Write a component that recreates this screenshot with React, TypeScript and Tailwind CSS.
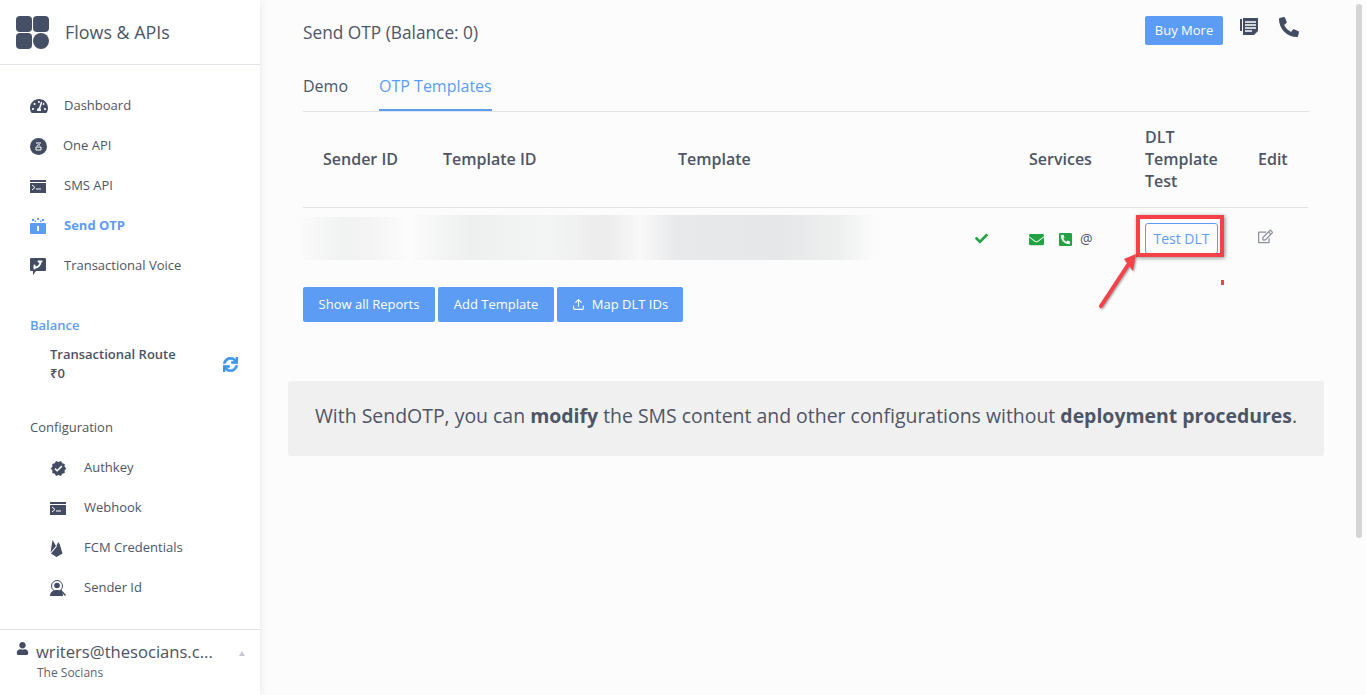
import { ReactNode } from 'react'
import { FaCheck, FaEnvelope, FaPhoneAlt, FaPhoneSquareAlt, FaRegEdit, FaSync, FaTachometerAlt, FaUser } from 'react-icons/fa'
import { MdVerified } from 'react-icons/md'
import { Upload } from 'lucide-react'

const TerminalIcon = () => (
  <svg width="16" height="13" viewBox="0 0 16 13">
    <path fill="currentColor" d="M0 0h16v13H0z" />
    <path fill="#fff" d="M0 2h16v1H0z" />
    <path stroke="#fff" strokeWidth="1" fill="none" d="M2 5l3 2.5L2 10M6 9h5" />
  </svg>
)

const OneApiIcon = () => (
  <svg width="17" height="17" viewBox="0 0 17 17">
    <circle cx="8.5" cy="8.5" r="8.5" fill="currentColor" />
    <path stroke="#fff" strokeWidth="1" fill="none" d="M6 5h5M7 8a2 1.5 0 0 1 3-1M6 9h5v3H6z" />
  </svg>
)

const OtpIcon = () => (
  <svg width="16" height="16" viewBox="0 0 16 16">
    <path fill="currentColor" d="M1 5h14a1 1 0 0 1 1 1v9a1 1 0 0 1-1 1H1a1 1 0 0 1-1-1V6a1 1 0 0 1 1-1z" />
    <path fill="#fff" d="M7 8h2v5H7z" />
    <path fill="currentColor" d="M2 1h2v2H2zM7 0h2v2H7zM12 1h2v2h-2zM4.5 2.5h1.5v1.5H4.500zM10 2.500h1.500v1.500H10z" />
  </svg>
)

const VoiceIcon = () => (
  <svg width="16" height="17" viewBox="0 0 16 17">
    <path fill="currentColor" d="M1 0h14a1 1 0 0 1 1 1v11a1 1 0 0 1-1 1H6l-3 4v-4H1a1 1 0 0 1-1-1V1a1 1 0 0 1 1-1z" />
    <path stroke="#fff" strokeWidth="2" strokeLinecap="round" fill="none" d="M5 9.500c3 0 5.500-2.500 5.500-6M8.500 3.500h3M4.500 7.500v3" />
  </svg>
)

const SenderIcon = () => (
  <svg width="16" height="16" viewBox="0 0 16 16">
    <circle cx="7" cy="6" r="5.500" fill="none" stroke="currentColor" />
    <circle cx="7" cy="5.500" r="2.800" fill="currentColor" />
    <path fill="currentColor" d="M0 16c0-4 3-6 7-6s6 2 6 6z" />
    <path stroke="currentColor" strokeWidth="1.500" d="M10.500 10l5 5.500" />
  </svg>
)

const FirebaseIcon = () => (
  <svg width="13" height="17" viewBox="0 0 12 17">
    <path fill="currentColor" d="M0 12.500L2 0l3.500 6zM6 5.500L7.800 2l1 2-2.300 3z" />
    <path fill="currentColor" d="M0.500 13.500L9 3.500l3 10L6 17z" />
  </svg>
)

const NewsIcon = () => (
  <svg width="18" height="17" viewBox="0 0 18 17">
    <path fill="currentColor" d="M3 0h15v13l-4 4H3z" />
    <path fill="currentColor" d="M0 1h2v12H0z" />
    <path stroke="#fff" strokeWidth="1.300" d="M5 4h11M5 7h11M5 10h11M5 13h7" />
  </svg>
)

const NavItem = ({ icon, label, active, textLeft = 'w-[34px]' }: { icon: ReactNode; label: string; active?: boolean; textLeft?: string }) => (
  <div className={`flex h-10 items-center text-[13px] ${active ? 'font-bold text-[#5d9cf5]' : 'text-[#4d5566]'}`}>
    <span className={`flex shrink-0 items-center ${textLeft} ${active ? 'text-[#5d9cf5]' : 'text-[#434c63]'}`}>{icon}</span>
    {label}
  </div>
)

const Sidebar = () => (
  <aside className="flex h-[695px] w-[260px] shrink-0 flex-col bg-white shadow-[2px_0_6px_rgba(0,0,0,0.06)]">
    <div className="flex h-[65px] items-center border-b border-[#e3e3ea] pl-4">
      <div className="grid grid-cols-2 gap-px">
        <span className="size-4 rounded-[4px] bg-[#454f66]" />
        <span className="size-4 rounded-[4px] bg-[#454f66]" />
        <span className="size-4 rounded-[4px] bg-[#454f66]" />
        <span className="size-4 rounded-full bg-[#454f66]" />
      </div>
      <span className="ml-4 text-[17.900px] text-[#4d5566]">Flows &amp; APIs</span>
    </div>
    <nav className="px-[30px] pt-[21px]">
      <NavItem icon={<FaTachometerAlt size={18} />} label="Dashboard" />
      <NavItem icon={<OneApiIcon />} label="One API" textLeft="w-[33px]" />
      <NavItem icon={<TerminalIcon />} label="SMS API" />
      <NavItem icon={<OtpIcon />} label="Send OTP" active />
      <NavItem icon={<VoiceIcon />} label="Transactional Voice" />
    </nav>
    <div className="mt-[29px] px-[30px]">
      <div className="h-5 text-[13px] font-semibold leading-5 text-[#5d9cf5]">Balance</div>
      <div className="mt-2.5 flex items-center justify-between pl-5">
        <div className="text-[13px] leading-[19px] text-[#4a5263]">
          <div className="font-semibold">Transactional Route</div>
          <div className="font-semibold">₹0</div>
        </div>
        <FaSync size={15} stroke="currentColor" strokeWidth={24} className="-mr-2 text-[#3f97e8]" />
      </div>
      <div className="mt-[34px] h-5 text-[13px] leading-5 text-[#4d5566]">Configuration</div>
      <div className="mt-[11px] pl-5">
        <NavItem icon={<MdVerified size={17} />} label="Authkey" />
        <NavItem icon={<TerminalIcon />} label="Webhook" />
        <NavItem icon={<FirebaseIcon />} label="FCM Credentials" />
        <NavItem icon={<SenderIcon />} label="Sender Id" />
      </div>
    </div>
    <div className="mt-auto flex h-[66px] border-t border-[#e3e3e6] pl-4 pr-[15px]">
      <FaUser size={13} className="mt-[12px] shrink-0 text-[#434c63]" />
      <div className="ml-[7px] min-w-0 flex-1 pt-[11px]">
        <div className="whitespace-nowrap text-[16.600px] font-medium leading-[22px] text-[#4a5263]">writers@thesocians.c...</div>
        <div className="pl-px text-[12px] leading-[20px] text-[#5b6273]">The Socians</div>
      </div>
      <span className="mt-[21px] size-0 border-x-[3.500px] border-b-[5px] border-x-transparent border-b-[#c6c9d0]" />
    </div>
  </aside>
)

const HeaderCell = ({ children }: { children: ReactNode }) => (
  <div className="flex items-center pb-[2px] pl-5 text-[16px] font-semibold text-[#4d5566]">{children}</div>
)

const ActionButton = ({ children, width }: { children: ReactNode; width: string }) => (
  <button className={`flex h-[35px] items-center justify-center gap-[7px] rounded-[2px] bg-[#5d9cf5] text-[13px] text-white ${width}`}>{children}</button>
)

const App = () => (
  <div className="relative flex h-[695px] w-[1366px] overflow-hidden bg-[#fcfcfc] font-['Open_Sans','Noto_Sans',sans-serif]">
    <Sidebar />
    <main className="flex-1 pl-[28px] pr-[42px]">
      <div className="px-[15px]">
        <div className="flex h-[65px] items-center justify-between">
          <h1 className="text-[17.300px] text-[#4d5566]">Send OTP (Balance: 0)</h1>
          <div className="flex items-center pb-[4px]">
            <button className="h-[29px] w-[78px] rounded-[2px] bg-[#5d9cf5] text-[13px] text-white">Buy More</button>
            <span className="ml-[17px] mt-[-9px] text-[#434c63]"><NewsIcon /></span>
            <FaPhoneAlt size={20} className="ml-[21px] mr-[10px] mt-[-8px] -scale-x-100 rotate-90 text-[#434c63]" />
          </div>
        </div>
        <div className="flex h-[47px] gap-[31px] border-b border-[#e3e3e6] text-[16px]">
          <div className="flex h-[46px] items-center pb-[5px] text-[#4d5566]">Demo</div>
          <div className="flex h-[46px] items-center border-b-2 border-[#5d9cf5] pb-[3px] text-[#5d9cf5]">OTP Templates</div>
        </div>
        <div className="grid grid-cols-[120px_235px_351px_116px_113px_70px]">
          <div className="col-span-6 grid h-[96px] grid-cols-subgrid border-b border-[#e3e3e6]">
            <HeaderCell>Sender ID</HeaderCell>
            <HeaderCell>Template ID</HeaderCell>
            <HeaderCell>Template</HeaderCell>
            <HeaderCell>Services</HeaderCell>
            <HeaderCell><span className="leading-[22px]">DLT<br />Template<br />Test</span></HeaderCell>
            <HeaderCell>Edit</HeaderCell>
          </div>
          <div className="col-span-6 grid h-[79px] grid-cols-subgrid">
            <div className="col-span-3 flex items-start pt-[9px]">
              <div className="h-[43px] w-[102px] bg-[linear-gradient(90deg,#fafafa,#f1f2f2_40%,#f3f3f3_60%,#fbfbfb)]" />
              <div className="ml-[7px] h-[45px] w-[228px] -translate-y-[2px] bg-[linear-gradient(90deg,#fbfbfb,#eeefef_25%,#f3f4f4_60%,#ececec_85%,#f8f8f8)]" />
              <div className="h-[45px] w-[235px] -translate-y-[2px] bg-[linear-gradient(90deg,#f9f9f9,#e8e9ea_15%,#e6e7e8_60%,#eeefef_85%,#fcfcfc)]" />
              <FaCheck size={13} className="ml-[100px] mt-[15px] shrink-0 text-[#23a244]" />
            </div>
            <div className="flex items-start gap-[8px] pl-5 pt-[24px]">
              <FaEnvelope size={15} className="text-[#23a244]" />
              <FaPhoneSquareAlt size={15} className="ml-[6px] text-[#23a244]" />
              <span className="-ml-[1px] -mt-[1px] text-[14px] leading-4 text-[#4d5566]">@</span>
            </div>
            <div className="pl-5 pt-[15px]">
              <button className="h-[31px] w-[73px] rounded-[3px] border border-[#5d9cf5] text-[14px] text-[#5d9cf5]">Test DLT</button>
            </div>
            <div className="pl-5 pt-[21px]">
              <FaRegEdit size={15} className="text-[#8a90a0]" />
            </div>
          </div>
        </div>
        <div className="flex gap-[3px]">
          <ActionButton width="w-[132px]">Show all Reports</ActionButton>
          <ActionButton width="w-[116px]">Add Template</ActionButton>
          <ActionButton width="w-[126px]"><Upload size={13} />Map DLT IDs</ActionButton>
        </div>
      </div>
      <div className="mt-[59px] flex h-[75px] items-center justify-center rounded-[3px] bg-[#f0f0f0] pb-[6px] text-[19.450px] text-[#4d5566]">
        <p className="whitespace-nowrap">With SendOTP, you can <b>modify</b> the SMS content and other configurations without <b>deployment procedures</b>.</p>
      </div>
    </main>

    {/* annotation over the table */}
    <div className="absolute left-[1136px] top-[215px] h-[42px] w-[88px] border-4 border-[#f44248] shadow-[1px_1px_4px_rgba(0,0,0,0.45)]" />
    <span className="absolute left-[1221px] top-[280px] h-[5px] w-[3px] bg-[#f44248]" />
    <svg className="absolute left-[1095px] top-[250px] drop-shadow-[1px_1px_1px_rgba(0,0,0,0.4)]" width="50" height="62" viewBox="0 0 50 62">
      <path d="M6 56L33 15" stroke="#f44248" strokeWidth="4" strokeLinecap="round" fill="none" />
      <path d="M41 4L29 9L38 21z" fill="#f44248" />
    </svg>
    <div className="absolute right-[4px] top-[4px] h-[534px] w-[6px] rounded-[3px] bg-[#d5d5d5]" />
  </div>
)

export default App
